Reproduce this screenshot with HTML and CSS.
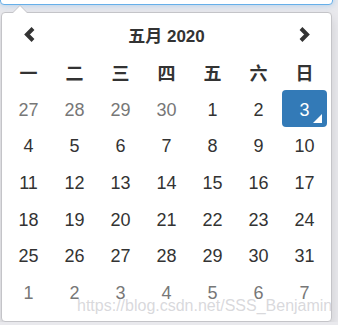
FILE: index.html
```html
<!DOCTYPE html>
<html lang="zh">
<head>
  <meta charset="UTF-8">
  <meta name="viewport" content="width=device-width, initial-scale=1.0">
  <title>datepicker</title>
  <link rel="stylesheet" href="styles.css">
</head>
<body>
  <div class="field"></div>
  <div class="picker">
    <div class="days">
      <div class="prev">
        <svg width="12" height="15" viewBox="0 0 12 15"><polyline points="10,1.5 4,7.5 10,13.5" fill="none" stroke="#333" stroke-width="4"/></svg>
      </div>
      <div class="title">五月 2020</div>
      <div class="next">
        <svg width="12" height="15" viewBox="0 0 12 15"><polyline points="2,1.5 8,7.5 2,13.5" fill="none" stroke="#333" stroke-width="4"/></svg>
      </div>

      <div class="dow">一</div><div class="dow">二</div><div class="dow">三</div><div class="dow">四</div><div class="dow">五</div><div class="dow">六</div><div class="dow">日</div>

      <div class="day old">27</div><div class="day old">28</div><div class="day old">29</div><div class="day old">30</div><div class="day">1</div><div class="day">2</div><div class="day active">3</div>
      <div class="day">4</div><div class="day">5</div><div class="day">6</div><div class="day">7</div><div class="day">8</div><div class="day">9</div><div class="day">10</div>
      <div class="day">11</div><div class="day">12</div><div class="day">13</div><div class="day">14</div><div class="day">15</div><div class="day">16</div><div class="day">17</div>
      <div class="day">18</div><div class="day">19</div><div class="day">20</div><div class="day">21</div><div class="day">22</div><div class="day">23</div><div class="day">24</div>
      <div class="day">25</div><div class="day">26</div><div class="day">27</div><div class="day">28</div><div class="day">29</div><div class="day">30</div><div class="day">31</div>
      <div class="day new">1</div><div class="day new">2</div><div class="day new">3</div><div class="day new">4</div><div class="day new">5</div><div class="day new">6</div><div class="day new">7</div>
    </div>
    <span class="mark">https://blog.csdn.net/SSS_Benjamin</span>
  </div>
</body>
</html>
```

FILE: styles.css
```css
body{
  margin: 0;
  background-color: #e9e9ed;
  font-family: "Liberation Sans", "Noto Sans CJK SC", sans-serif;
  color: #333;
  overflow: hidden;
}
/* 입력칸 */
.field{
  width: 333px;
  height: 34px;
  margin-top: -29px;
  box-sizing: border-box;
  background-color: white;
  border: 1px solid #66afe9;
  border-radius: 4px;
  box-shadow: 0 0 6px rgba(102,175,233,.5);
}
/* 달력 */
.picker{
  position: relative;
  width: 331px;
  margin: 7px 0 0 1px;
  box-sizing: border-box;
  padding: 4px 3.5px 10px;
  background-color: white;
  border: 1px solid #c4c4c8;
  border-radius: 4px;
  box-shadow: 0 6px 12px rgba(0,0,0,.12);
}
.picker:before{
  content: "";
  position: absolute;
  top: -8px;
  left: 10px;
  border-left: 8px solid transparent;
  border-right: 8px solid transparent;
  border-bottom: 8px solid #c4c4c8;
}
.picker:after{
  content: "";
  position: absolute;
  top: -7px;
  left: 11px;
  border-left: 7px solid transparent;
  border-right: 7px solid transparent;
  border-bottom: 7px solid white;
}
.days{
  display: grid;
  grid-template-columns: repeat(7, 46px);
  grid-auto-rows: 36.7px;
  font-size: 18px;
}
.days div{
  display: flex;
  align-items: center;
  justify-content: center;
}
.days .day{
  padding-top: 3px;
}
.title{
  grid-column: 2 / 7;
  font-weight: bold;
  font-size: 17px;
  padding-bottom: 2px;
}
.days .prev, .days .next{
  padding-bottom: 2px;
}
.dow{
  font-weight: bold;
  font-size: 18px;
}
.old, .new{
  color: #777;
}
.days .active{
  position: relative;
  background-color: #337ab7;
  color: white;
  border-radius: 4px;
  margin: 0 0.5px;
}
.active:after{
  content: "";
  position: absolute;
  right: 5px;
  bottom: 4px;
  border-left: 9px solid transparent;
  border-bottom: 9px solid white;
}
.mark{
  position: absolute;
  left: 75px;
  top: 284px;
  font-size: 16px;
  color: rgba(200,200,205,.7);
  white-space: nowrap;
}
```
